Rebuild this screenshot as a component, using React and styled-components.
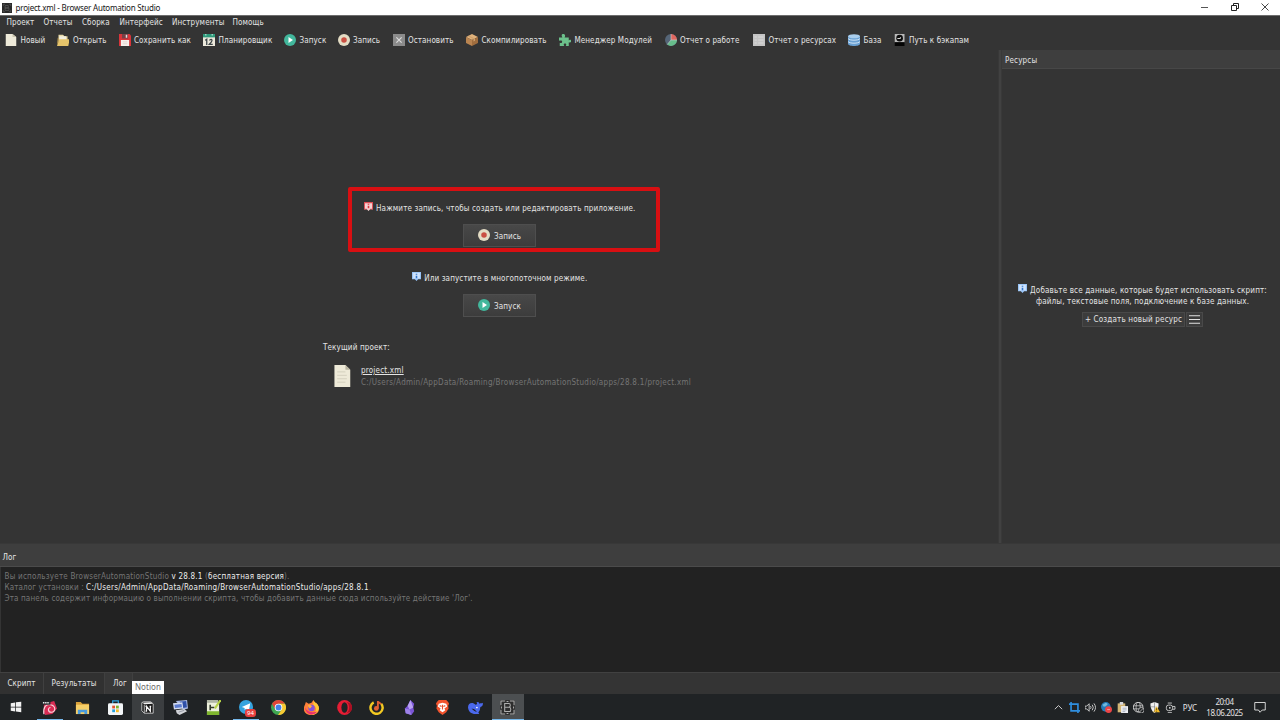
import React from 'react';
import styled, { createGlobalStyle } from 'styled-components';

const COLORS = {
	window: '#343434',
	panelHead: '#3e3e3e',
	log: '#222222',
	text: '#e4e4e4',
	muted: '#757575',
	taskbar: '#202325',
	highlight: '#d80f12',
};

const UI_FONT = '"DejaVu Sans Condensed", "DejaVu Sans", sans-serif';
const SYSTEM_FONT = '"Noto Sans", "Open Sans", sans-serif';

const TOOLBAR = [
	{ icon: 'file', label: 'Новый', width: 52, gap: 3.5 },
	{ icon: 'folder', label: 'Открыть', width: 62, gap: 4 },
	{ icon: 'save', label: 'Сохранить как', width: 84, gap: 3 },
	{ icon: 'calendar', label: 'Планировщик', width: 81, gap: 3.5 },
	{ icon: 'play', label: 'Запуск', width: 54, gap: 3.5 },
	{ icon: 'record', label: 'Запись', width: 55, gap: 3 },
	{ icon: 'stop', label: 'Остановить', width: 73, gap: 3 },
	{ icon: 'box', label: 'Скомпилировать', width: 93, gap: 3.5 },
	{ icon: 'puzzle', label: 'Менеджер Модулей', width: 106, gap: 3.5 },
	{ icon: 'pie', label: 'Отчет о работе', width: 88, gap: 3 },
	{ icon: 'list', label: 'Отчет о ресурсах', width: 95, gap: 3.5 },
	{ icon: 'database', label: 'База', width: 46, gap: 3.5 },
	{ icon: 'backup', label: 'Путь к бэкапам', width: 90, gap: 3 },
];

const MENU = [
	['Проект', 37],
	['Отчеты', 38.5],
	['Сборка', 37.5],
	['Интерфейс', 52.5],
	['Инструменты', 60.5],
	['Помощь', 40],
];

const TASKS = [
	{ icon: 'pinwheel', open: true },
	{ icon: 'explorer' },
	{ icon: 'store' },
	{ icon: 'notion', hover: true },
	{ icon: 'remote' },
	{ icon: 'notepad' },
	{ icon: 'telegram', open: true },
	{ icon: 'chrome' },
	{ icon: 'firefox' },
	{ icon: 'opera' },
	{ icon: 'music' },
	{ icon: 'crystal' },
	{ icon: 'brave' },
	{ icon: 'whale' },
	{ icon: 'bas', active: true },
];

const TRAY = ['chevron', 'crop', 'speaker', 'globeRed', 'clipboard', 'network', 'shield', 'device'];

/* All drawings share a 16x16 grid */
const ICONS = {
	file: (
		<>
			<path d="M1 0h9l5 4v13H1z" fill="#eeead9" />
			<path d="M10 0l5 4h-5z" fill="#c9c4ae" />
		</>
	),
	folder: (
		<>
			<path d="M2 1h6l2 2h4v8H2z" fill="#e8d9a6" />
			<path d="M3 3h9v6H3z" fill="#f3efdf" />
			<path d="M3 7h14l-2 9H0z" fill="#e6c46b" />
			<path d="M0 16l2-7V5H1z" fill="#c9a34f" />
		</>
	),
	save: (
		<>
			<path d="M0 0h14l2 2v14H0z" fill="#d8343a" />
			<path d="M4 0h8v6H4z" fill="#754248" />
			<path d="M9 1h2v4H9z" fill="#e9dcdc" />
			<path d="M2.500 8h11v8h-11z" fill="#f5f1ec" />
			<path d="M5 10.500h6M5 13h6" stroke="#e0cbc7" />
		</>
	),
	calendar: (
		<>
			<path d="M0 2h16v14H0z" fill="#ece9dc" />
			<path d="M0 0h16v4.500H0z" fill="#2e9a7c" />
			<path d="M3 0h1.500v2H3zM11.500 0H13v2h-1.500z" fill="#bfe3d8" />
			<path d="M3 8.500L5 7v7.500M8.500 8.500q3-2.500 3.500 0Q12 10 8.500 13.700H13" fill="none" stroke="#3d4548" strokeWidth="1.700" />
		</>
	),
	play: (
		<>
			<circle cx="8" cy="8" r="8" fill="#42b79c" />
			<path d="M6 4l6 4-6 4z" fill="#fff" />
		</>
	),
	record: (
		<>
			<circle cx="8" cy="8" r="8" fill="#e3dcc4" />
			<circle cx="8" cy="8" r="3.700" fill="#c94f42" />
		</>
	),
	stop: (
		<>
			<path d="M0 0h16v16H0z" fill="#8b8b8b" />
			<path d="M4.500 4.500l7 7M11.500 4.500l-7 7" stroke="#dcdcdc" strokeWidth="1.600" />
		</>
	),
	box: (
		<>
			<path d="M8 0l8 4-8 4-8-4z" fill="#e0b27c" />
			<path d="M0 4l8 4v8l-8-4z" fill="#b98450" />
			<path d="M16 4l-8 4v8l8-4z" fill="#a06d3e" />
			<path d="M4 2l8 4v3l-2 1V7L2.500 3z" fill="#cfa26e" />
		</>
	),
	puzzle: (
		<path
			d="M0 4.500h4.500C2.500 1.500 4 0 5.800 0S9 1.500 7.500 4.500H13v4c1.500-1.500 3.500-.5 3.500 1S15 12 13 11v5H9c1.300-2.500.5-3.500-1-3.500s-2.300 1-1 3.500H1v-4.500c2 .8 3.200.2 3.200-1.300S3 8 0 9z"
			fill="#6cc08b"
		/>
	),
	pie: (
		<>
			<circle cx="8" cy="8" r="8" fill="#556577" />
			<path d="M8 8V0a8 8 0 0 1 8 8z" fill="#e0675f" />
			<path d="M8 8h8A8 8 0 0 1 3 14z" fill="#67bd8b" />
			<path d="M8 8V0M8 8h8M8 8l-5 6" stroke="#c9d2d4" strokeWidth=".8" />
		</>
	),
	list: (
		<>
			<path d="M0 0h16v16H0z" fill="#c4c4c4" />
			<path d="M2 4h3m2 0h7M2 8h3m2 0h7M2 12h3m2 0h7" stroke="#dedede" strokeWidth="1.200" />
		</>
	),
	database: (
		<>
			<path d="M0 3v10c0 4 16 4 16 0V3z" fill="#6aa1d4" />
			<ellipse cx="8" cy="3" rx="8" ry="2.800" fill="#a9cdec" />
			<path d="M0 6c2 3 14 3 16 0M0 10c2 3 14 3 16 0" fill="none" stroke="#d3e6f6" strokeWidth="1.300" />
		</>
	),
	backup: (
		<>
			<path d="M1 0h13v11H1z" fill="#b9b9b9" />
			<path d="M1 11h13v5H1z" fill="#050505" />
			<circle cx="7.500" cy="5.500" r="4.400" fill="#0c0c0c" />
			<path d="M4.500 6h3.500l1-1.500" stroke="#d5d5d5" fill="none" strokeWidth="1.500" />
		</>
	),
	document: (
		<>
			<path d="M2.500 0h8l3.500 3.500V16H2.500z" fill="#eeead8" />
			<path d="M10.500 0L14 3.500h-3.500z" fill="#b9b4a0" />
			<path d="M4.500 5h6M4.500 7.500h7M4.500 10h7M4.500 12.500h6" stroke="#d3cfbd" strokeWidth=".7" />
		</>
	),
	infoRed: (
		<>
			<path d="M0 0h16v13h-5l-3 3-3-3H0z" fill="#f6d2d3" />
			<path d="M0 0h16v2H0zM0 0h1.700v13H0zM14.300 0H16v13h-1.700zM0 12h5v1.500H0zM11 12h5v1.500h-5z" fill="#e04d54" />
			<path d="M8 3v2M8 6.500V11" stroke="#d8363d" strokeWidth="2.800" />
		</>
	),
	infoBlue: (
		<>
			<path d="M0 0h16v13h-5l-3 3-3-3H0z" fill="#98c4f7" />
			<path d="M2 1.500h12v10H2z" fill="#cfe3fc" />
			<path d="M8 3v2M8 6.500V11" stroke="#2f74cb" strokeWidth="2.800" />
		</>
	),
	bas: (
		<>
			<path d="M0 0h16v16H0z" fill="#2d2d2d" />
			<path d="M1 5.500V1h4.500M10.500 1H15v4.500M15 10.500V15h-4.500M5.500 15H1v-4.500M7 1.500h2M7 14.500h2M1.500 7v2M14.500 7v2" fill="none" stroke="#b0b0b0" strokeWidth="1.100" />
			<path d="M5 3.700h4.500q1.500 0 1.500 1.800T9.500 7.700H5M5 7.700h5q1.500 0 1.500 2.300T10 12.300H5M5 3.200v9.600" fill="none" stroke="#b0b0b0" strokeWidth="1.100" />
		</>
	),
	basDark: (
		<>
			<path d="M0 0h16v16H0z" fill="#292929" />
			<path d="M2 5V2h3M11 2h3v3M14 11v3h-3M5 14H2v-3M5 4h5v4H5zM5 8h6v4H5z" fill="none" stroke="#666" strokeWidth=".9" />
		</>
	),
	windows: <path d="M1 3l6-1v5.500H1zM8 1.800L15 1v6.500H8zM1 8.500h6V14l-6-1zM8 8.500h7V15l-7-1z" fill="#f1f1f1" />,
	pinwheel: (
		<>
			<path d="M2 4l11-3 3 8-5 6-8 1-1-4z" fill="#d92c54" />
			<path d="M2 15c-1-7 2-11 7-10 6 1 6 8 1 8-4 0-4-5-1-5" fill="none" stroke="#f5d7dd" strokeWidth="1.200" />
			<path d="M0 1h9v4H0z" fill="#22262a" />
			<path d="M1 3h7" stroke="#e8e8e8" strokeWidth="1.500" strokeDasharray="1.600 .7" />
		</>
	),
	explorer: (
		<>
			<path d="M1 2h5l2 2h7v11H1z" fill="#d9a13a" />
			<path d="M1 5h14v10H1z" fill="#f6cf68" />
			<path d="M3 15v-4.500h10V15h-3v-2H6v2z" fill="#4a9bdc" />
		</>
	),
	store: (
		<>
			<path d="M5 4V1h6v3" fill="none" stroke="#2ca7df" strokeWidth="1.300" />
			<rect y="3.500" width="16" height="12.500" rx="1.500" fill="#f2f5f7" />
			<path d="M4.500 6H7.500v3h-3z" fill="#e25630" />
			<path d="M8.500 6h3v3h-3z" fill="#7db52f" />
			<path d="M4.500 10h3v3h-3z" fill="#239fdb" />
			<path d="M8.500 10h3v3h-3z" fill="#f3b927" />
		</>
	),
	notion: (
		<>
			<path d="M1 2L3 1h9l3 2.500V15H4l-3-3z" fill="#171717" stroke="#dcdcdc" />
			<path d="M1.500 2L12 1.500l2.500 2-10 .5z" fill="#efefef" />
			<path d="M4 4.500V15" stroke="#dcdcdc" />
			<path d="M6.800 12.500v-6l4.700 6v-6M5.500 6.500h1.800M10.500 6.500h2M5.500 12.500h2" fill="none" stroke="#f6f6f6" strokeWidth="1.500" />
		</>
	),
	remote: (
		<>
			<path d="M3 1l12-1 1 9-5 1.500z" fill="#a9b8e2" />
			<path d="M7 1.800l7-.7.800 6.700-5 1z" fill="#2f50a8" />
			<path d="M0 3.500l10-1 1 6.500-10 1z" fill="#d3dbf0" />
			<path d="M1.500 5l7.500-.8.600 3.600-7.500.8z" fill="#5b7bd0" />
			<path d="M3 11l9-1.500 3 2.500-8 4-3-2z" fill="#d3d5da" />
			<path d="M6 13l6-2" stroke="#9398a2" />
		</>
	),
	notepad: (
		<>
			<path d="M1 2h13v14H1z" fill="#edf0dc" />
			<path d="M1 0h12v3H1z" fill="#b1b6a5" />
			<path d="M1 12h13v4H1z" fill="#7eb52e" />
			<path d="M4.500 5v6M4.500 8h4.500" stroke="#363d2d" strokeWidth="1.700" />
			<path d="M15.500 0L9.500 9" stroke="#b6d246" strokeWidth="2.200" />
		</>
	),
	telegram: (
		<>
			<circle cx="7.500" cy="7.500" r="7.500" fill="#35a3de" />
			<path d="M3 7.500l9-4-1.500 8-3-2.300-1.500 1.500V8.500z" fill="#fff" />
		</>
	),
	chrome: (
		<>
			<circle cx="8" cy="8" r="8" fill="#3fa652" />
			<path d="M1.100 4A8 8 0 0 1 14.900 4H8L4.600 10z" fill="#df4437" />
			<path d="M14.900 4A8 8 0 0 1 7.500 16L11.500 10 8 4z" fill="#f7c933" />
			<circle cx="8" cy="8" r="4" fill="#fff" />
			<circle cx="8" cy="8" r="3.100" fill="#4381e8" />
		</>
	),
	firefox: (
		<>
			<path d="M1 5l1-3 3 2 3-1 2-3 2 3 1 0c6 7 2 13-5 13S-2 11 1 5z" fill="#ff803a" />
			<path d="M10 0c0 3 6 3 6 9-1 4-4 7-8 7 6-3 6-8 2-11z" fill="#ffc736" />
			<path d="M1 8c1 8 10 10 13 4-3 2-10 2-13-4z" fill="#ee2e70" />
			<circle cx="8" cy="8.500" r="3.400" fill="#8453db" />
			<path d="M4 6c2-2 4 0 5 1-2 0-1 2-3 2z" fill="#ffb038" />
		</>
	),
	opera: (
		<>
			<ellipse cx="8" cy="8" rx="7.800" ry="8" fill="#e51d34" />
			<ellipse cx="8" cy="8" rx="3.300" ry="5.600" fill="#202325" />
			<path d="M10 2c4 2 4 10 0 12 9-1 8-11 0-12z" fill="#aa1023" />
		</>
	),
	music: (
		<>
			<path d="M5 2.500a6.500 6.500 0 1 0 8 1.500" fill="none" stroke="#f3c922" strokeWidth="2.600" />
			<path d="M9.500 1v8M9.500 1.500c1 2 3 1 3 3" fill="none" stroke="#e26034" strokeWidth="2" />
			<circle cx="7.800" cy="9" r="2.500" fill="#e26034" />
		</>
	),
	crystal: (
		<>
			<path d="M9 0l4 4-1 4 1 4-3 4-6-2-1-5 3-3z" fill="#7b55d6" />
			<path d="M9 0L6 6l2 4 4-2z" fill="#b8a0f3" />
			<path d="M3 9l5 1 2 6-6-2z" fill="#9d82e8" />
		</>
	),
	brave: (
		<>
			<path d="M4 0h8l2 2 1 2-1 2 .500 3-2.500 4-4 3-4-3-2.500-4L2 6 1 4l1-2z" fill="#f2532d" />
			<path d="M4 4l4-1 4 1 1 3-3 2 1 2-3 2-3-2 1-2-3-2z" fill="#fff" />
			<path d="M5 6l2 1M11 6L9 7M8 5v5" stroke="#e9512e" strokeWidth="1.200" />
		</>
	),
	whale: (
		<>
			<path d="M0 8c0-5 5-6 8-3 2 0 2-2 1-3 3 0 3 1 3 2 2-1 3 0 4-1 0 4-2 4-3 5 0 3-1 4-2 5l1 2c-4 0-11 1-12-7z" fill="#4b69ed" />
			<path d="M3.500 9.500c2 0 3 3 6 3-2-2-3-4-6-3z" fill="#202325" />
			<circle cx="9.500" cy="8" r=".9" fill="#fff" />
		</>
	),
	chevron: <path d="M1.500 11L8 4.500l6.500 6.500" fill="none" stroke="#dedede" strokeWidth="1.600" />,
	crop: <path d="M3 0v13h13M0 3h13v13" fill="none" stroke="#2f8fe0" strokeWidth="2.400" />,
	speaker: (
		<>
			<path d="M0 6h2.500L6 2.500v11L2.500 10H0z" fill="none" stroke="#e4e4e4" strokeWidth="1.200" />
			<path d="M8 6q1.500 2 0 4M10.500 4q3 4 0 8M13 2q4.500 6 0 12" fill="none" stroke="#e4e4e4" strokeWidth="1.200" />
		</>
	),
	globeRed: (
		<>
			<circle cx="7" cy="7" r="7" fill="#247bb9" />
			<path d="M2 4l5-3 3 2-3 3-3 1z" fill="#71b9dc" />
			<circle cx="11" cy="11" r="5" fill="#ec4546" />
			<path d="M9 11h4" stroke="#f7b0b0" strokeWidth="1.200" />
		</>
	),
	clipboard: (
		<>
			<path d="M1 2h11v13H1z" fill="#d2b574" />
			<path d="M4 0h5v4H4z" fill="#d7d9dd" />
			<path d="M6 6h10v10H6z" fill="#eef0f4" />
			<path d="M8 9h6M8 11.500h6M8 14h4" stroke="#8c96aa" />
		</>
	),
	network: (
		<>
			<circle cx="7.500" cy="7.500" r="7" fill="none" stroke="#dadada" strokeWidth="1.300" />
			<ellipse cx="7.500" cy="7.500" rx="3" ry="7" fill="none" stroke="#dadada" />
			<path d="M.5 5.500h14M.5 10h14" stroke="#dadada" />
			<circle cx="12" cy="12" r="4" fill="#202325" stroke="#dadada" />
			<path d="M9.500 14.500l5-5" stroke="#dadada" />
		</>
	),
	shield: (
		<>
			<path d="M8 0l6 2c0 7-2 11-6 14-4-3-6-7-6-14z" fill="#f0f0f0" />
			<path d="M8 7h5q-1 5-5 8z" fill="#d8d8d8" />
			<path d="M11 6l5 9H6z" fill="#f3bd2c" />
			<path d="M11 9v3M11 13v1" stroke="#332c17" />
			<path d="M8 0v15M2 7h7" stroke="#6d7072" strokeWidth=".8" />
		</>
	),
	device: (
		<>
			<rect x="2" y="4.500" width="9" height="8" rx="3" fill="none" stroke="#dedede" strokeWidth="1.200" />
			<path d="M11 6.500h3.500v4H11M4 1.500h6M4 15.500h6" fill="none" stroke="#dedede" strokeWidth="1.200" />
			<circle cx="7" cy="8.500" r="1.300" fill="#dedede" />
		</>
	),
	message: <path d="M1 2h14v10h-4l-3 3-2-3H1z" fill="none" stroke="#e5e5e5" strokeWidth="1.200" />,
	lines: <path d="M0 2.500h16M0 8h16M0 13.500h16" stroke="#e1e1e1" strokeWidth="1.500" />,
};

const Icon = ({ name, size = 11 }) => (
	<Svg viewBox="0 0 16 16" $size={size} preserveAspectRatio="none" aria-hidden="true">
		{ICONS[name]}
	</Svg>
);

const App = () => (
	<Screen>
		<GlobalStyle />
		<TitleBar>
			<Icon name="basDark" size={10} />
			<Title>project.xml - Browser Automation Studio</Title>
			<Controls>
				<svg width="8" height="8" viewBox="0 0 8 8"><path d="M0 4.500h7" stroke="#555" /></svg>
				<svg width="8" height="8" viewBox="0 0 8 8"><path d="M.5 2.500h5v5h-5zM2.500 2V.5h5v5H6" fill="none" stroke="#222" /></svg>
				<svg width="8" height="8" viewBox="0 0 8 8"><path d="M.5.500l7 7M7.500.500l-7 7" stroke="#333" strokeWidth=".9" /></svg>
			</Controls>
		</TitleBar>
		<MenuBar>
			{MENU.map(([label, width]) => <MenuItem key={label} $width={width}>{label}</MenuItem>)}
		</MenuBar>
		<Toolbar>
			{TOOLBAR.map(item => (
				<Tool key={item.label} $width={item.width} $gap={item.gap}>
					<Icon name={item.icon} size={12} />
					<ToolLabel>{item.label}</ToolLabel>
				</Tool>
			))}
		</Toolbar>
		<Body>
			<Workspace>
				<Hint $top={152}>
					<Icon name="infoRed" size={9} />
					<span>Нажмите запись, чтобы создать или редактировать приложение.</span>
				</Hint>
				<ActionButton><Icon name="record" size={12} /><span>Запись</span></ActionButton>
				<Hint $top={25}>
					<Icon name="infoBlue" size={9} />
					<span>Или запустите в многопоточном режиме.</span>
				</Hint>
				<ActionButton><Icon name="play" size={12} /><span>Запуск</span></ActionButton>
				<Highlight />
				<Project>
					<span>Текущий проект:</span>
					<ProjectRow>
						<Icon name="document" size={22} />
						<ProjectInfo>
							<ProjectLink>project.xml</ProjectLink>
							<Path>C:/Users/Admin/AppData/Roaming/BrowserAutomationStudio/apps/28.8.1/project.xml</Path>
						</ProjectInfo>
					</ProjectRow>
				</Project>
			</Workspace>
			<Splitter />
			<Resources>
				<ResourcesHead>Ресурсы</ResourcesHead>
				<ResourcesBody>
					<ResourceHint>
						<div><Icon name="infoBlue" size={9} /><span>Добавьте все данные, которые будет использовать скрипт:</span></div>
						<p>файлы, текстовые поля, подключение к базе данных.</p>
					</ResourceHint>
					<ResourceActions>
						<SmallButton $width={103}>+ Создать новый ресурс</SmallButton>
						<SmallButton $width={17}><Icon name="lines" size={11} /></SmallButton>
					</ResourceActions>
				</ResourcesBody>
			</Resources>
		</Body>
		<LogHead>Лог</LogHead>
		<Log>
			<LogLine $track={0.2}>Вы используете BrowserAutomationStudio <b>v 28.8.1</b> (<b>бесплатная версия</b>).</LogLine>
			<LogLine $track={0.11} $strongTrack={0.275}>Каталог установки : <b>C:/Users/Admin/AppData/Roaming/BrowserAutomationStudio/apps/28.8.1</b><i>.</i></LogLine>
			<LogLine $track={0.145}>Эта панель содержит информацию о выполнении скрипта, чтобы добавить данные сюда используйте действие 'Лог'.</LogLine>
		</Log>
		<Tabs>
			<Tab $width={44}>Скрипт</Tab>
			<Tab $width={61}>Результаты</Tab>
			<Tab $width={28} $active>Лог</Tab>
			<Tooltip>Notion</Tooltip>
		</Tabs>
		<Taskbar>
			<StartButton><Icon name="windows" size={12} /></StartButton>
			<Tasks>
				{TASKS.map(task => (
					<Task key={task.icon} $open={task.open} $hover={task.hover} $active={task.active}>
						<Icon name={task.icon} size={task.icon === 'notion' ? 13 : 15} />
						{task.icon === 'telegram' && <Badge>94</Badge>}
					</Task>
				))}
			</Tasks>
			<Tray>
				{TRAY.map(name => <TrayCell key={name}><Icon name={name} size={name === 'chevron' ? 9 : 11} /></TrayCell>)}
				<Language>РУС</Language>
				<Clock><span>20:04</span><span>18.06.2025</span></Clock>
				<Notifications><Icon name="message" size={12} /></Notifications>
			</Tray>
		</Taskbar>
	</Screen>
);

const GlobalStyle = createGlobalStyle`
	* { box-sizing: border-box; }
	body { margin: 0; overflow: hidden; }
	p { margin: 0; }
`;

const Svg = styled.svg`
	display: block;
	flex: none;
	width: ${props => props.$size}px;
	height: ${props => props.$size}px;
`;

const Screen = styled.div`
	display: flex;
	flex-direction: column;
	width: 1280px;
	height: 720px;
	background: ${COLORS.window};
	color: ${COLORS.text};
	font-family: ${UI_FONT};
	font-size: 8px;
	line-height: 11px;
	letter-spacing: .09px;
	white-space: nowrap;
`;

const TitleBar = styled.header`
	display: flex;
	align-items: center;
	height: 15px;
	padding: 0 11px 0 2px;
	background: #fff;
	color: #161616;
	font-family: ${SYSTEM_FONT};
`;

const Title = styled.span`
	margin-left: 3.5px;
	font-size: 8px;
	letter-spacing: -.2px;
`;

const Controls = styled.div`
	display: flex;
	gap: 22px;
	margin-left: auto;
	margin-top: -2px;
`;

const MenuBar = styled.nav`
	display: flex;
	align-items: center;
	height: 15px;
	padding: 0 0 2px 6.5px;
	border-top: 1px solid #6d6d6d;
`;

const MenuItem = styled.span`
	width: ${props => props.$width}px;
`;

const Toolbar = styled.div`
	display: flex;
	align-items: center;
	height: 20px;
	padding-left: 5px;
`;

const Tool = styled.div`
	display: flex;
	align-items: center;
	gap: ${props => props.$gap}px;
	width: ${props => props.$width}px;
	flex: none;
`;

const ToolLabel = styled.span`
	padding-top: 1px;
`;

const Body = styled.div`
	display: flex;
	height: 493px;
`;

const Workspace = styled.main`
	position: relative;
	display: flex;
	flex-direction: column;
	align-items: center;
	width: 998px;
`;

const Highlight = styled.div`
	position: absolute;
	left: 348px;
	top: 137px;
	width: 312px;
	height: 65px;
	border: 4px solid ${COLORS.highlight};
	border-radius: 2px;
`;

const Hint = styled.div`
	display: flex;
	align-items: flex-start;
	gap: 3.5px;
	height: 11px;
	margin-top: ${props => props.$top}px;
	margin-bottom: 11px;
	padding-left: 1px;
	letter-spacing: .135px;

	span { padding-top: 1px; }
`;

const ActionButton = styled.button`
	display: flex;
	align-items: center;
	justify-content: center;
	gap: 4px;
	width: 73px;
	height: 23px;
	flex: none;
	padding: 0 0 1px 1px;
	border: 1px solid #4e4e4e;
	background: linear-gradient(#484848, #3c3c3c);
	color: ${COLORS.text};
	font: inherit;
	letter-spacing: inherit;

	span { padding-top: 2px; }
`;

const Project = styled.section`
	align-self: flex-start;
	margin: 25px 0 0 323px;
	letter-spacing: .13px;
`;

const ProjectRow = styled.div`
	display: flex;
	align-items: center;
	gap: 8px;
	margin: 10px 0 0 8px;
	letter-spacing: .29px;
`;

const ProjectInfo = styled.div`
	padding-top: 2px;
`;

const ProjectLink = styled.div`
	text-decoration: underline;
	line-height: 12px;
	letter-spacing: .2px;
`;

const Path = styled.div`
	color: ${COLORS.muted};
`;

const Splitter = styled.div`
	width: 4px;
	border-left: 1px solid #383838;
	border-right: 1px solid #393939;
	background: #414141;
`;

const Resources = styled.aside`
	display: flex;
	flex: 1;
	flex-direction: column;
`;

const ResourcesHead = styled.div`
	height: 19px;
	padding: 5px 3px 0;
	border-bottom: 1px solid #474747;
	background: ${COLORS.panelHead};
	letter-spacing: .15px;
`;

const ResourcesBody = styled.div`
	display: flex;
	flex-direction: column;
	align-items: center;
	padding: 215px 0 0 3px;
`;

const ResourceHint = styled.div`
	text-align: center;
	letter-spacing: .15px;

	div { display: flex; gap: 3px; height: 11px; }
	div span { padding-top: 1px; }
	p { padding-top: 1px; height: 11px; }
`;

const ResourceActions = styled.div`
	display: flex;
	gap: 1px;
	margin-top: 6px;
`;

const SmallButton = styled.button`
	display: flex;
	align-items: center;
	justify-content: center;
	width: ${props => props.$width}px;
	height: 15px;
	padding: 0;
	border: 1px solid #494949;
	background: #3c3c3c;
	color: ${COLORS.text};
	font: inherit;
	letter-spacing: .17px;
`;

const LogHead = styled.div`
	height: 24px;
	padding: 8px 2.5px 0;
	border-top: 1px solid #383838;
	border-bottom: 1px solid #4b4b4b;
	background: ${COLORS.panelHead};
`;

const Log = styled.section`
	height: 105px;
	padding: 4px 3.5px;
	border-left: 1px solid #343434;
	background: ${COLORS.log};
	color: ${COLORS.muted};

	b { color: #ededed; font-weight: normal; }
	i { color: #a05b32; font-style: normal; }
`;

const LogLine = styled.div`
	letter-spacing: ${props => props.$track}px;

	b { letter-spacing: ${props => props.$strongTrack || props.$track}px; }
`;

const Tabs = styled.nav`
	position: relative;
	display: flex;
	height: 22px;
	border-top: 1px solid #414141;
`;

const Tab = styled.div`
	display: flex;
	align-items: center;
	justify-content: center;
	width: ${props => props.$width}px;
	padding-left: ${props => (props.$active ? 3 : 0)}px;
	border-right: 1px solid #404040;
	background: ${props => (props.$active ? '#383838' : '#313131')};
`;

const Tooltip = styled.div`
	position: absolute;
	left: 132px;
	top: 8px;
	width: 32px;
	height: 13px;
	background: #fff;
	color: #6a6a6a;
	font-family: ${SYSTEM_FONT};
	line-height: 12px;
	text-align: center;
`;

const Taskbar = styled.footer`
	display: flex;
	height: 26px;
	background: ${COLORS.taskbar};
	font-family: ${SYSTEM_FONT};
`;

const StartButton = styled.div`
	display: flex;
	align-items: center;
	justify-content: center;
	width: 33.8px;
	padding-right: 2px;
`;

const Tasks = styled.div`
	display: flex;
	gap: .73px;
`;

const Task = styled.div`
	position: relative;
	display: flex;
	align-items: center;
	justify-content: center;
	width: 32px;
	background: ${props => (props.$active ? '#4c4f51' : props.$hover ? '#3b3e40' : 'transparent')};

	&::after {
		content: '';
		display: ${props => (props.$open || props.$active ? 'block' : 'none')};
		position: absolute;
		bottom: 0;
		left: ${props => (props.$active ? 0 : 3)}px;
		right: ${props => (props.$active ? 0 : 3)}px;
		height: 1px;
		background: #76b9ed;
	}
`;

const Badge = styled.span`
	position: absolute;
	right: 6px;
	bottom: 3px;
	width: 11px;
	height: 8px;
	border-radius: 3px;
	background: #e83f3e;
	color: #fff;
	font-size: 6px;
	line-height: 8px;
	text-align: center;
`;

const Tray = styled.div`
	display: flex;
	align-items: center;
	margin-left: auto;
`;

const TrayCell = styled.div`
	display: flex;
	justify-content: center;
	width: 16px;
`;

const Language = styled.span`
	width: 24px;
	text-align: center;
`;

const Clock = styled.div`
	display: flex;
	flex-direction: column;
	align-items: center;
	width: 45px;
	font-size: 8px;
	letter-spacing: -.45px;
`;

const Notifications = styled.div`
	display: flex;
	justify-content: center;
	width: 33px;
	padding-right: 8px;
`;

export default App;
